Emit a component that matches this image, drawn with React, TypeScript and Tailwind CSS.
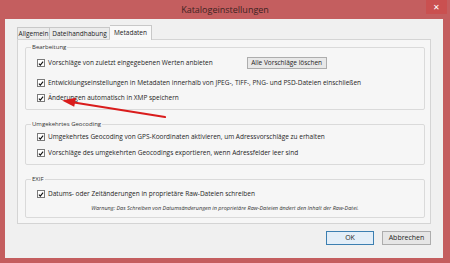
function Check({ label }: { label: string }) {
  return (
    <div className="flex items-center gap-[3px]">
      <span className="w-[8px] h-[8px] bg-white border border-[#7a7a7a] flex items-center justify-center">
        <svg viewBox="0 0 8 8" className="w-[7px] h-[7px]">
          <path d="M1.2 4.2 L3.1 6.1 L6.8 1.6" fill="none" stroke="#111" strokeWidth="1.5" />
        </svg>
      </span>
      <span>{label}</span>
    </div>
  )
}

function Group({ title, children, className }: { title: string; children: React.ReactNode; className?: string }) {
  return (
    <fieldset className={`border border-[#dadada] rounded-[2px] px-[11px] ${className ?? ''}`}>
      <legend className="ml-[-6px] px-[1px] text-[6px] leading-[8px] text-[#333]">{title}</legend>
      {children}
    </fieldset>
  )
}

export default function App() {
  return (
    <div className="relative w-[450px] h-[263px] bg-[#c45e5f] font-['Open_Sans',sans-serif] text-[#1e1e1e] overflow-hidden flex flex-col">
      <div className="relative h-[19px] flex items-center justify-center text-[9px] text-[#3d2323]">
        Katalogeinstellungen
        <div className="absolute right-[3px] top-0 w-[21px] h-[14px] bg-[#ca5050] flex items-center justify-center text-white text-[8px] leading-none">
          ✕
        </div>
      </div>

      <div className="ml-[5px] mr-[7px] h-[239px] bg-[#f0f0f0] flex flex-col pl-[12px] pr-[12px] pt-[5px]">
        <div className="flex items-end h-[15px] text-[6.5px] text-[#222]">
          <div className="w-[33px] h-[12px] border border-[#c8c8c8] border-b-0 bg-[#ebebeb] flex items-center justify-center">Allgemein</div>
          <div className="w-[60px] h-[12px] border border-[#c8c8c8] border-l-0 border-b-0 bg-[#ebebeb] flex items-center justify-center">Dateihandhabung</div>
          <div className="w-[42px] h-[15px] border border-[#c8c8c8] border-l-0 border-b-0 bg-[#f9f9f9] -mb-px relative flex items-center justify-center">Metadaten</div>
        </div>

        <div className="h-[185px] border border-[#d4d4d4] bg-[#f6f6f6] pl-[7px] pr-[5px] pt-[3px] flex flex-col text-[6.5px]">
          <Group title="Bearbeitung">
            <div className="h-[12px] mt-[6px] flex items-center">
              <Check label="Vorschläge von zuletzt eingegebenen Werten anbieten" />
              <div className="ml-[34px] w-[80px] h-[12px] border border-[#adadad] bg-[#e8e8e8] flex items-center justify-center text-[6.5px]">
                Alle Vorschläge löschen
              </div>
            </div>
            <div className="h-[10px] mt-[9px] flex items-center">
              <Check label="Entwicklungseinstellungen in Metadaten innerhalb von JPEG-, TIFF-, PNG- und PSD-Dateien einschließen" />
            </div>
            <div className="h-[10px] mt-[5px] mb-[6px] flex items-center">
              <Check label="Änderungen automatisch in XMP speichern" />
            </div>
          </Group>

          <Group title="Umgekehrtes Geocoding" className="mt-[10px]">
            <div className="h-[10px] mt-[4px] flex items-center">
              <Check label="Umgekehrtes Geocoding von GPS-Koordinaten aktivieren, um Adressvorschläge zu erhalten" />
            </div>
            <div className="h-[10px] mt-[6px] mb-[6px] flex items-center">
              <Check label="Vorschläge des umgekehrten Geocodings exportieren, wenn Adressfelder leer sind" />
            </div>
          </Group>

          <Group title="EXIF" className="mt-[10px]">
            <div className="h-[10px] mt-[6px] flex items-center">
              <Check label="Datums- oder Zeitänderungen in proprietäre Raw-Dateien schreiben" />
            </div>
            <div className="h-[10px] mt-[4px] mb-[4px] flex items-center justify-center italic text-[5.5px] text-[#333]">
              Warnung: Das Schreiben von Datumsänderungen in proprietäre Raw-Dateien ändert den Inhalt der Raw-Datei.
            </div>
          </Group>
        </div>

        <div className="flex justify-end gap-[8px] mt-[7px] text-[7px]">
          <div className="w-[48px] h-[14px] border border-[#3c7fb1] bg-[#e3eef8] flex items-center justify-center">OK</div>
          <div className="w-[49px] h-[14px] border border-[#adadad] bg-[#e6e6e6] flex items-center justify-center">Abbrechen</div>
        </div>
      </div>

      <svg className="absolute left-0 top-0 pointer-events-none" width="450" height="263" viewBox="0 0 450 263">
        <line x1="165" y1="117" x2="74" y2="102.5" stroke="#d91c1c" strokeWidth="2.2" strokeLinecap="round" />
        <path d="M62 100.6 L76 97.8 L74.2 106.8 Z" fill="#d91c1c" />
      </svg>
    </div>
  )
}
